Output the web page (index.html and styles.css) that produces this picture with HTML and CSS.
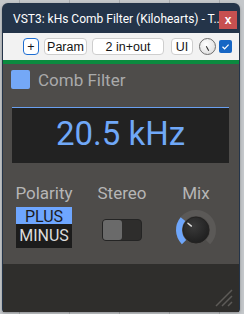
FILE: index.html
```html
<!DOCTYPE html>
<html lang="en">

<head>
    <meta charset="UTF-8">
    <meta name="viewport" content="width=device-width, initial-scale=1.0">
    <title>kHs Comb Filter</title>
    <link rel="stylesheet" href="styles.css">
</head>

<body>
    <div class="window">
        <div class="titleBar">
            <span class="titleText">VST3: kHs Comb Filter (Kilohearts) - T...</span>
            <span class="closeBtn">x</span>
        </div>

        <div class="toolbar">
            <span class="tbBtn plusBtn">+</span>
            <span class="tbBtn paramBtn">Param</span>
            <span class="tbBtn ioBtn">2 in+out</span>
            <span class="tbBtn uiBtn">UI</span>
            <span class="tbKnob"><i></i></span>
            <span class="tbCheck">
                <svg width="13" height="13" viewBox="0 0 13 13">
                    <path d="M3.5 6.8 L5.6 8.8 L9.6 4.6" fill="none" stroke="#fff" stroke-width="1.2" />
                </svg>
            </span>
        </div>
        <div class="greenBar"></div>

        <div class="plugin">
            <div class="header">
                <span class="enableBox"></span>
                <span class="pluginName">Comb Filter</span>
            </div>

            <!-- frequency display -->
            <div class="display">20.5 kHz</div>

            <div class="controls">
                <div class="ctrl">
                    <div class="ctrlLabel">Polarity</div>
                    <div class="polarity">
                        <div class="polOn">PLUS</div>
                        <div class="polOff">MINUS</div>
                    </div>
                </div>
                <div class="ctrl">
                    <div class="ctrlLabel">Stereo</div>
                    <div class="toggle"><span class="thumb"></span></div>
                </div>
                <div class="ctrl">
                    <div class="ctrlLabel">Mix</div>
                    <svg class="mixKnob" width="44" height="44" viewBox="0 0 44 44">
                        <defs>
                            <radialGradient id="body" cx="40%" cy="35%" r="70%">
                                <stop offset="0" stop-color="#3a3a3a" />
                                <stop offset="1" stop-color="#1e1e1e" />
                            </radialGradient>
                        </defs>
                        <path d="M9.98 34.02 A17 17 0 1 1 34.02 34.02" fill="none" stroke="#5b5957" stroke-width="6" />
                        <path d="M9.98 34.02 A17 17 0 0 1 8.98 11.07" fill="none" stroke="#6ea6fb" stroke-width="6" />
                        <circle cx="22" cy="22" r="13" fill="url(#body)" stroke="#242322" stroke-width="1" />
                        <line x1="17.4" y1="18.1" x2="13.9" y2="15.2" stroke="#e0e0e0" stroke-width="1.4" stroke-linecap="round" />
                    </svg>
                </div>
            </div>
        </div>

        <div class="footer">
            <svg class="grip" width="20" height="20" viewBox="0 0 20 20">
                <path d="M2 19 L18 3 M8 19 L18 9 M14 19 L18 15" stroke="#5d5b58" stroke-width="1.5" />
            </svg>
        </div>
    </div>
</body>

</html>
```

FILE: styles.css
```css
body {
    margin: 0;
    padding: 0;
    width: 244px;
    height: 314px;
    overflow: hidden;
    background-color: rgb(196, 199, 202);
    background-image: repeating-linear-gradient(90deg, transparent 0, transparent 19px, rgb(168, 171, 174) 19px, rgb(168, 171, 174) 20px, transparent 20px, transparent 50px);
    font-family: Roboto, "Noto Sans", sans-serif;
}

.window {
    margin: 3px 0 0 2px;
    width: 238px;
    height: 309px;
    background-color: rgb(36, 52, 73);
    border-radius: 6px 6px 3px 3px;
    display: flex;
    flex-direction: column;
    box-shadow: 0 1px 3px rgba(0, 0, 0, 0.3);
}

.titleBar {
    height: 30px;
    display: flex;
    align-items: center;
    padding-left: 11px;
    padding-right: 25px;
    position: relative;
}

.titleText {
    color: white;
    font-family: Roboto, "Noto Sans", sans-serif;
    font-size: 12px;
    line-height: 14px;
    white-space: nowrap;
    margin-top: 2px;
}

.closeBtn {
    position: absolute;
    right: 3px;
    top: 8px;
    width: 18px;
    height: 18px;
    background-color: rgb(199, 80, 80);
    color: white;
    font-family: "Liberation Sans", Arial, sans-serif;
    font-size: 12px;
    font-weight: bold;
    display: flex;
    align-items: center;
    justify-content: center;
}

.toolbar {
    margin: 0 1px;
    height: 27px;
    background-color: rgb(242, 242, 242);
    display: flex;
    align-items: center;
    padding-left: 20px;
    font-family: "Liberation Sans", Arial, sans-serif;
    font-size: 12.5px;
}

.tbBtn {
    height: 17px;
    box-sizing: border-box;
    background-color: white;
    border: 1px solid rgb(206, 206, 206);
    border-radius: 4px;
    display: flex;
    align-items: center;
    justify-content: center;
    color: rgb(20, 20, 20);
    margin-top: 1px;
}

.plusBtn {
    width: 16px;
    border-color: rgb(30, 110, 210);
    margin-right: 5px;
}

.paramBtn {
    width: 43px;
    margin-right: 5px;
}

.ioBtn {
    width: 72px;
    margin-right: 7px;
}

.uiBtn {
    width: 22px;
    margin-right: 6px;
}

.tbKnob {
    width: 17px;
    height: 17px;
    box-sizing: border-box;
    border-radius: 50%;
    border: 1px solid rgb(110, 110, 110);
    background: radial-gradient(circle at 40% 35%, white, rgb(215, 215, 215));
    position: relative;
    margin-right: 3px;
    margin-top: 1px;
}

.tbKnob i {
    position: absolute;
    left: 7px;
    top: 7px;
    width: 1px;
    height: 5px;
    background-color: rgb(40, 40, 40);
    transform: rotate(-30deg);
}

.tbCheck {
    width: 13px;
    height: 13px;
    background-color: rgb(22, 102, 196);
    border-radius: 2px;
    display: flex;
}

.greenBar {
    margin: 0 1px;
    height: 4px;
    background-color: rgb(11, 138, 63);
}

.plugin {
    margin: 0 1px;
    height: 202px;
    background-color: rgb(78, 76, 74);
    box-sizing: border-box;
    padding-top: 6px;
}

.header {
    display: flex;
    align-items: center;
    padding-left: 8px;
    height: 19px;
}

.enableBox {
    width: 19px;
    height: 19px;
    background-color: rgb(116, 168, 247);
    border-radius: 2px;
    margin-right: 8px;
}

.pluginName {
    color: rgb(170, 170, 170);
    font-size: 17px;
    margin-top: 1px;
}

.display {
    margin: 18px 10px 0 9px;
    height: 56px;
    box-sizing: border-box;
    border-top: 1px solid rgb(106, 160, 240);
    background-color: rgb(34, 34, 34);
    color: rgb(112, 168, 248);
    font-size: 33px;
    display: flex;
    align-items: center;
    justify-content: center;
    padding-bottom: 3px;
}

.controls {
    display: grid;
    grid-template-columns: 82px 74px 74px;
    margin-top: 20px;
}

.ctrl {
    display: flex;
    flex-direction: column;
    align-items: center;
}

.ctrlLabel {
    color: rgb(182, 182, 182);
    font-size: 17px;
    line-height: 20px;
}

.polarity {
    margin-top: 4px;
    width: 56px;
    font-size: 16px;
    text-align: center;
}

.polOn {
    height: 17px;
    line-height: 19px;
    background-color: rgb(110, 166, 255);
    color: rgb(28, 28, 30);
}

.polOff {
    height: 24px;
    line-height: 24px;
    background-color: rgb(28, 28, 28);
    color: rgb(220, 220, 220);
}

.toggle {
    margin-top: 16px;
    width: 40px;
    height: 22px;
    box-sizing: border-box;
    border: 1px solid rgb(36, 36, 36);
    border-radius: 4px;
    background-color: rgb(46, 45, 44);
    display: flex;
}

.thumb {
    width: 19px;
    height: 20px;
    border-radius: 3px;
    background-color: rgb(106, 106, 106);
}

.mixKnob {
    margin-top: 5px;
}

.footer {
    margin: 0 1px;
    height: 43px;
    background-color: rgb(47, 46, 44);
    display: flex;
    justify-content: flex-end;
    align-items: flex-end;
    padding: 0 5px 5px 0;
}
```
